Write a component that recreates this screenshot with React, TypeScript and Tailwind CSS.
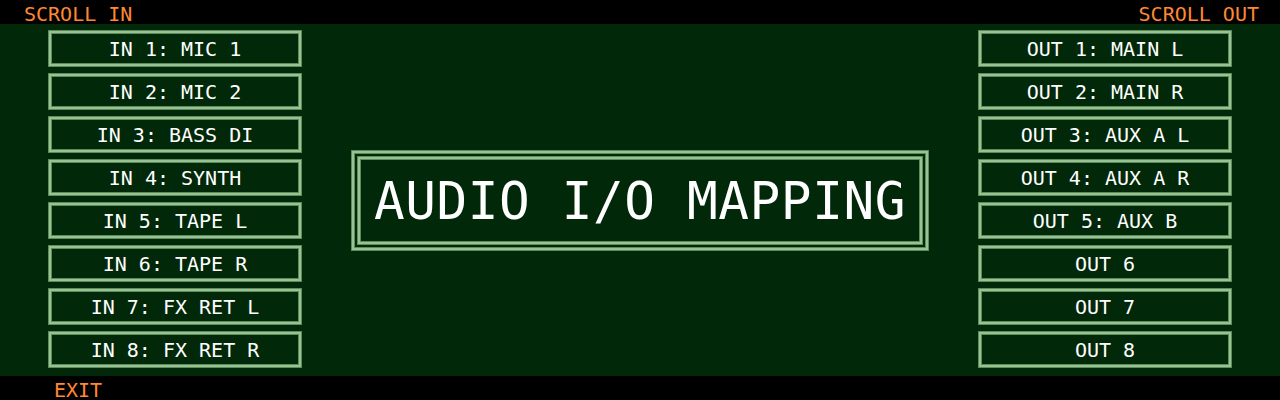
import React from "react";

const inputs = [
  "IN 1: MIC 1",
  "IN 2: MIC 2",
  "IN 3: BASS DI",
  "IN 4: SYNTH",
  "IN 5: TAPE L",
  "IN 6: TAPE R",
  "IN 7: FX RET L",
  "IN 8: FX RET R",
];

const outputs = [
  "OUT 1: MAIN L",
  "OUT 2: MAIN R",
  "OUT 3: AUX A L",
  "OUT 4: AUX A R",
  "OUT 5: AUX B",
  "OUT 6",
  "OUT 7",
  "OUT 8",
];

const mono = { fontFamily: '"DejaVu Sans Mono", "Liberation Mono", monospace' };

function ChannelButton({ label }: { label: string }) {
  return (
    <div className="h-[37px] w-[254px] border border-[#5d8b5a] bg-[#5d8b5a]">
      <div className="h-full w-full border-2 border-[#97c293]">
        <div className="flex h-full w-full items-center justify-center border border-[#5d8b5a] bg-[#012808]">
          <span className="text-[20px] leading-[20px] text-white">{label}</span>
        </div>
      </div>
    </div>
  );
}

function Column({ items }: { items: string[] }) {
  return (
    <div className="flex flex-col gap-[6px] pt-[6px]">
      {items.map((item) => (
        <ChannelButton key={item} label={item} />
      ))}
    </div>
  );
}

export default function App() {
  return (
    <div className="flex h-[400px] w-[1280px] flex-col bg-black" style={mono}>
      <div className="flex h-[24px] items-start justify-between bg-black pl-[24px] pr-[21px]">
        <span className="mt-[5px] text-[20px] leading-[19px] text-[#ff8833]">SCROLL IN</span>
        <span className="mt-[5px] text-[20px] leading-[19px] text-[#ff8833]">SCROLL OUT</span>
      </div>

      <div className="flex h-[352px] items-start justify-between bg-[#012808] px-[48px]">
        <Column items={inputs} />

        <div className="flex h-full items-center">
          <div className="border border-[#5d8b5a]">
            <div className="border-2 border-[#97c293]">
              <div className="border border-[#5d8b5a] bg-[#012808] p-[2px]">
                <div className="border border-[#5d8b5a]">
                  <div className="border-2 border-[#97c293]">
                    <div className="flex h-[83px] w-[560px] items-center justify-center border border-[#5d8b5a] bg-[#012808] pt-[2px]">
                      <span className="text-[51px] leading-[51px] tracking-[0.6px] text-white">
                        AUDIO I/O MAPPING
                      </span>
                    </div>
                  </div>
                </div>
              </div>
            </div>
          </div>
        </div>

        <Column items={outputs} />
      </div>

      <div className="flex h-[24px] items-start bg-black pl-[54px]">
        <span className="mt-[5px] text-[20px] leading-[19px] text-[#ff8833]">EXIT</span>
      </div>
    </div>
  );
}
